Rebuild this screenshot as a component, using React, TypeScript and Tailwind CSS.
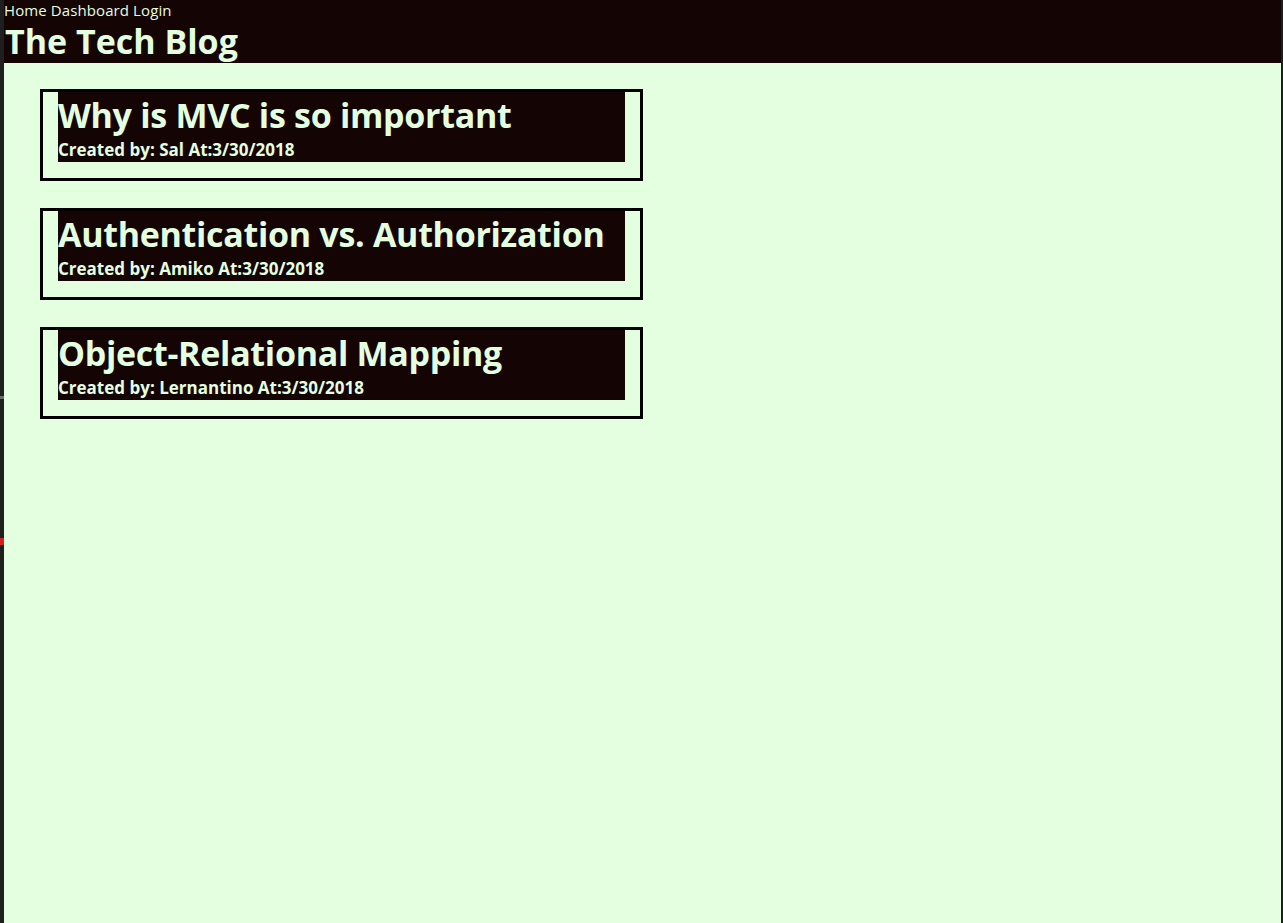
const posts = [
  { title: "Why is MVC is so important", author: "Sal", date: "3/30/2018" },
  { title: "Authentication vs. Authorization", author: "Amiko", date: "3/30/2018" },
  { title: "Object-Relational Mapping", author: "Lernantino", date: "3/30/2018" },
];

export default function App() {
  return (
    <div className="flex min-h-[923px] bg-[#1f1f1f] font-['Open_Sans',sans-serif]">
      {/* window edge marks */}
      <div className="relative w-[4px] shrink-0">
        <div className="absolute left-0 top-[396px] h-[3px] w-[4px] bg-[#6b6b6b]" />
        <div className="absolute left-0 top-[538px] h-[7px] w-[4px] bg-[#d42020]" />
      </div>
      <div className="flex-1 bg-[#e3ffe0]">
        <header className="h-[63px] bg-[#150404] text-[#e3ffe0]">
          <nav className="text-[15px] leading-[20px] tracking-[0.1px]">
            <a className="mr-[4px]">Home</a>
            <a className="mr-[4px]">Dashboard</a>
            <a>Login</a>
          </nav>
          <h1 className="pl-[1px] text-[34px] font-bold leading-[42px]">The Tech Blog</h1>
        </header>
        <main className="flex flex-col gap-[27px] pl-[36px] pt-[26px]">
          {posts.map((p) => (
            <div key={p.title} className="w-[603px] border-[3px] border-black px-[15px] pb-[16px]">
              <div className="bg-[#150404] text-[#e3ffe0]">
                <h2 className="text-[34px] font-bold leading-[46px] tracking-[-0.3px]">{p.title}</h2>
                <p className="text-[17px] font-bold leading-[24px]">
                  Created by: {p.author} At:{p.date}
                </p>
              </div>
            </div>
          ))}
        </main>
      </div>
      <div className="w-[2px] shrink-0 bg-[#1f1f1f]" />
    </div>
  );
}
